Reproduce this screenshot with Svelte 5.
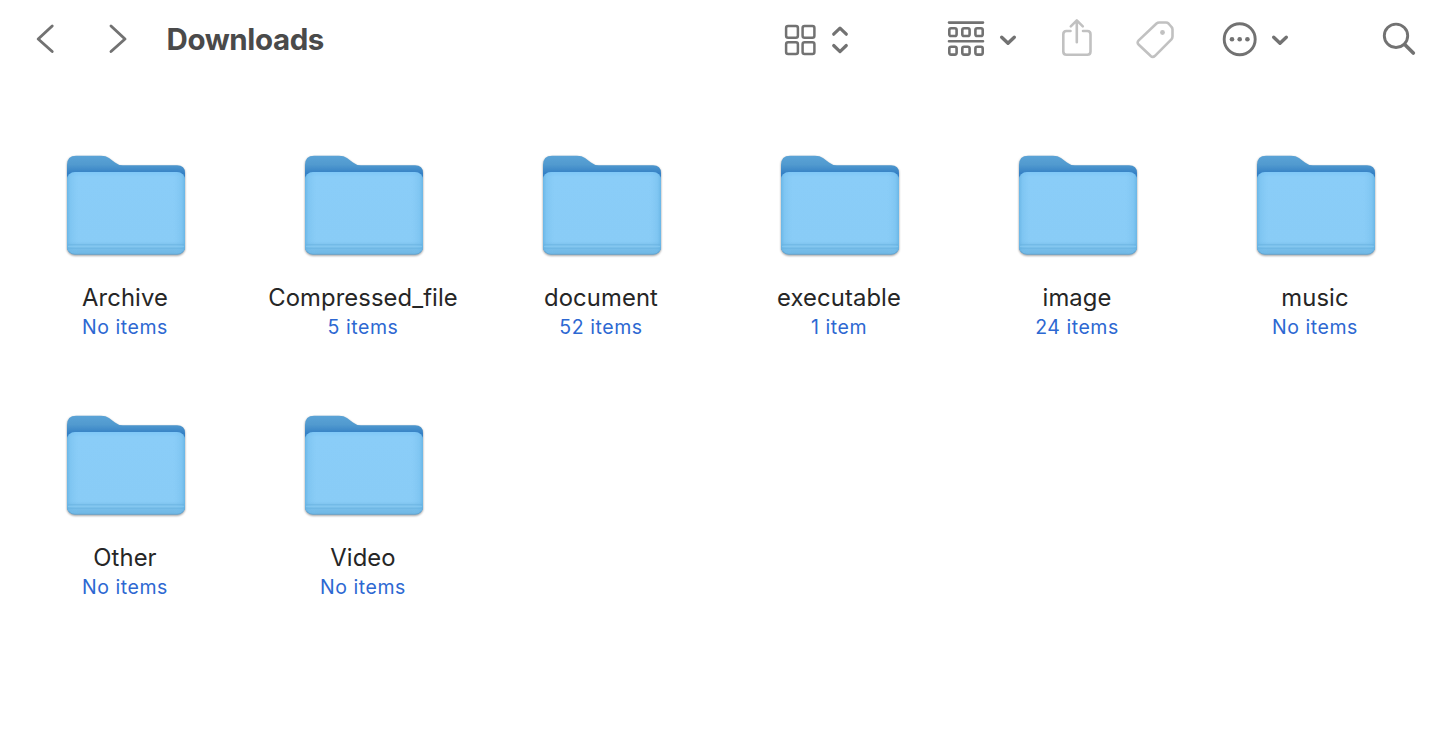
<script>
  const folders = [
    { name: 'Archive', info: 'No items' },
    { name: 'Compressed_file', info: '5 items' },
    { name: 'document', info: '52 items' },
    { name: 'executable', info: '1 item' },
    { name: 'image', info: '24 items' },
    { name: 'music', info: 'No items' },
    { name: 'Other', info: 'No items' },
    { name: 'Video', info: 'No items' }
  ];
</script>

<svg class="defs" aria-hidden="true">
  <defs>
    <linearGradient id="back" x1="0" y1="0" x2="0" y2="1">
      <stop offset="0" stop-color="#5ba3d6" />
      <stop offset=".09" stop-color="#519acf" />
      <stop offset=".18" stop-color="#3480c5" />
      <stop offset="1" stop-color="#3480c5" />
    </linearGradient>
    <linearGradient id="front" x1="0" y1="0" x2="0" y2="1">
      <stop offset="0" stop-color="#7fc7f7" />
      <stop offset=".06" stop-color="#8acdf8" />
      <stop offset=".84" stop-color="#89ccf6" />
      <stop offset=".89" stop-color="#7cc1ec" />
      <stop offset="1" stop-color="#70b7e4" />
    </linearGradient>
    <linearGradient id="sides">
      <stop offset="0" stop-color="#5faee0" stop-opacity=".75" />
      <stop offset=".03" stop-color="#6bb8e8" stop-opacity=".35" />
      <stop offset=".1" stop-color="#7cc3ef" stop-opacity="0" />
      <stop offset=".9" stop-color="#7cc3ef" stop-opacity="0" />
      <stop offset=".97" stop-color="#6bb8e8" stop-opacity=".35" />
      <stop offset="1" stop-color="#5faee0" stop-opacity=".75" />
    </linearGradient>
    <symbol id="folder" viewBox="54 145 142 120">
      <path fill="url(#back)" d="M67 165Q67 155.800 76 155.800H101Q106 155.800 109 158L115 162.500Q118 165.200 123 165.200H177Q185 165.200 185 173V246Q185 254 177 254H75Q67 254 67 246Z" />
      <rect x="67" y="172" width="118" height="82.500" rx="8" fill="url(#front)" />
      <rect x="67" y="172" width="118" height="82.500" rx="8" fill="url(#sides)" />
      <path d="M68 244.500H184M68 248.500H184" stroke="#68b1df" stroke-opacity=".5" />
      <path d="M68 246.500H184" stroke="#8bcbf2" stroke-opacity=".6" />
      <path d="M69 251.500Q71 254.300 75 254.300H177Q181 254.300 183 251.500" fill="none" stroke="#5b9bc6" stroke-width=".6" />
    </symbol>
  </defs>
</svg>

<div class="window">
  <header>
    <svg class="icon" width="30" height="78" viewBox="30 0 30 78"><path d="M52.200 26L38.200 39L52.200 51.500" /></svg>
    <svg class="icon forward" width="30" height="78" viewBox="102 0 30 78"><path d="M111 26L125 39L111 51.500" /></svg>
    <h1>Downloads</h1>
    <svg class="icon view" width="75" height="78" viewBox="780 0 75 78">
      <g stroke-width="2.500">
        <rect x="786.100" y="25.900" width="11.800" height="11.800" rx="2" /><rect x="802.600" y="25.900" width="11.800" height="11.800" rx="2" />
        <rect x="786.100" y="42.200" width="11.800" height="11.800" rx="2" /><rect x="802.600" y="42.200" width="11.800" height="11.800" rx="2" />
      </g>
      <path stroke-width="3.200" d="M833.700 34.200L840 28.200L846.300 34.200M833.700 45.500L840 51.600L846.300 45.500" />
    </svg>
    <svg class="icon group" width="76" height="78" viewBox="944 0 76 78">
      <path stroke-width="2.600" d="M949 22.600H983M949 41.300H983" />
      <g stroke-width="2.600">
        <rect x="949.300" y="28.200" width="7.300" height="7.800" rx="1.800" /><rect x="962.300" y="28.200" width="7.300" height="7.800" rx="1.800" /><rect x="975.400" y="28.200" width="7.300" height="7.800" rx="1.800" />
        <rect x="949.300" y="46.800" width="7.300" height="7.800" rx="1.800" /><rect x="962.300" y="46.800" width="7.300" height="7.800" rx="1.800" /><rect x="975.400" y="46.800" width="7.300" height="7.800" rx="1.800" />
      </g>
      <path stroke-width="3.400" d="M1001.700 37.200L1008 43.300L1014.300 37.200" />
    </svg>
    <svg class="icon pale share" width="38" height="78" viewBox="1058 0 38 78"><path d="M1070.500 31H1066.500Q1063.300 31 1063.300 34.300V51.500Q1063.300 54.700 1066.500 54.700H1087.300Q1090.500 54.700 1090.500 51.500V34.300Q1090.500 31 1087.300 31H1083M1076.800 42.200V20.800M1070.800 26.300L1076.800 20.300L1082.800 26.300" /></svg>
    <svg class="icon pale tag" width="46" height="78" viewBox="1132 0 46 78"><path d="M1156.500 23.500Q1157.700 22.500 1159.300 22.500H1166Q1167.500 22.500 1168.500 23.500L1171.500 27Q1172.500 28 1172.500 29.500V36.500Q1172.500 38 1171.400 39.300L1155 55.800Q1152.700 58 1150.500 55.800L1138.800 44.800Q1136.500 42.600 1138.700 40.400Z" /><circle cx="1162.500" cy="32.500" r="2.400" class="dot" /></svg>
    <svg class="icon more" width="72" height="78" viewBox="1220 0 72 78">
      <circle cx="1239.700" cy="39.300" r="15.500" />
      <g class="dot"><circle cx="1232" cy="39.300" r="2.300" /><circle cx="1239.700" cy="39.300" r="2.300" /><circle cx="1247.400" cy="39.300" r="2.300" /></g>
      <path stroke-width="3.400" d="M1273.700 37.200L1280 43.300L1286.300 37.200" />
    </svg>
    <svg class="icon search" width="42" height="78" viewBox="1378 0 42 78"><circle cx="1396" cy="35.800" r="11.700" /><path stroke-width="3.700" d="M1405 44.800L1413.300 53" /></svg>
  </header>

  <main>
    {#each folders as folder}
      <article>
        <svg class="folder" width="142" height="120"><use href="#folder" /></svg>
        <span class="name">{folder.name}</span>
        <span class="info">{folder.info}</span>
      </article>
    {/each}
  </main>
</div>

<style>
  :global(body) { margin: 0; background: #fff; }
  .defs { display: block; width: 0; height: 0; }
  .window { width: 1442px; height: 746px; overflow: hidden; background: #fff; font-family: Inter, sans-serif; }
  header { display: flex; height: 78px; padding-left: 30px; align-items: center; }
  svg { flex-shrink: 0; }
  .icon { fill: none; stroke: #727272; stroke-width: 2.900; stroke-linecap: round; stroke-linejoin: round; }
  .forward { margin-left: 42px; }
  h1 { width: 613.500px; margin: 0 0 0 34.500px; color: #4a4a4a; font-size: 29.500px; line-height: 40px; font-weight: 700; letter-spacing: -.4px; }
  .group { margin-left: 89px; }
  .share { margin-left: 38px; }
  .tag { margin-left: 36px; }
  .more { margin-left: 42px; }
  .search { margin-left: 86px; }
  .pale { stroke: #c1c1c1; stroke-width: 2.600; }
  .dot { fill: #727272; stroke: none; }
  .pale .dot { fill: #c1c1c1; }
  main { display: grid; grid-template-columns: repeat(6, 238px); grid-auto-rows: 260px; padding: 67px 0 0 6px; }
  article { display: flex; flex-direction: column; align-items: center; }
  .folder { filter: drop-shadow(0 1px 1px rgb(0 0 0 / .4)); }
  .name { margin-top: 17px; color: #262626; font-size: 23.800px; line-height: 32px; letter-spacing: .1px; }
  .info { color: #2d68d2; font-size: 19.500px; line-height: 26px; letter-spacing: .55px; }
</style>
